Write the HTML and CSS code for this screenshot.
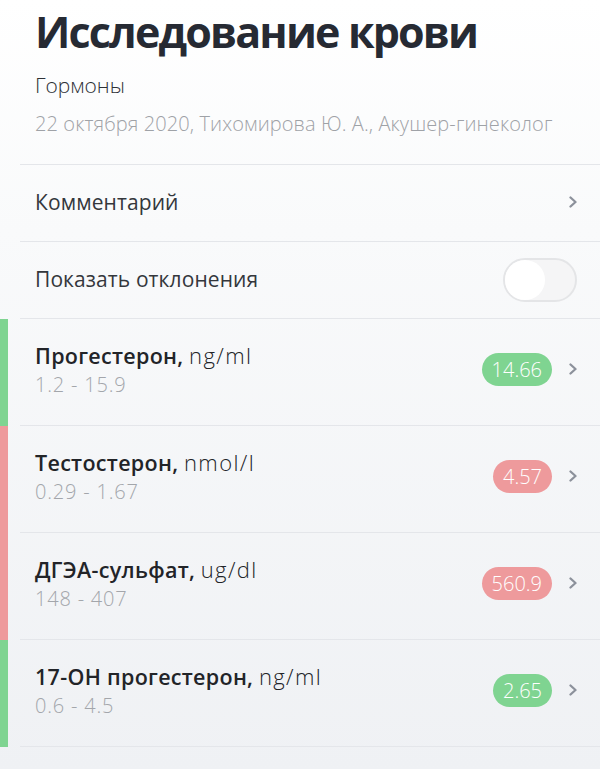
FILE: index.html
```html
<!DOCTYPE html>
<html lang="ru">
<head>
<meta charset="utf-8">
<title>Исследование крови</title>
<link rel="stylesheet" href="styles.css">
</head>
<body>
<div class="page">
  <header class="header">
    <h1 class="title">Исследование крови</h1>
    <div class="subtitle">Гормоны</div>
    <div class="meta">22 октября 2020, Тихомирова Ю. А., Акушер-гинеколог</div>
  </header>
  <div class="list">
    <div class="row">
      <div class="row-inner first simple">
        <span class="label">Комментарий</span>
        <svg class="chev" viewBox="0 0 10 12" width="10" height="12"><path d="M2.5 1.5 L7.5 6 L2.5 10.5" fill="none" stroke="#8c919b" stroke-width="2.3" stroke-linecap="round" stroke-linejoin="round"/></svg>
      </div>
    </div>
    <div class="row">
      <div class="row-inner simple">
        <span class="label">Показать отклонения</span>
        <span class="toggle"><span class="knob"></span></span>
      </div>
    </div>
    <div class="row ok">
      <div class="row-inner test">
        <div class="info">
          <div class="name"><b>Прогестерон,</b> <span class="unit">ng/ml</span></div>
          <div class="range">1.2 - 15.9</div>
        </div>
        <span class="badge green">14.66</span>
        <svg class="chev" viewBox="0 0 10 12" width="10" height="12"><path d="M2.5 1.5 L7.5 6 L2.5 10.5" fill="none" stroke="#8c919b" stroke-width="2.3" stroke-linecap="round" stroke-linejoin="round"/></svg>
      </div>
    </div>
    <div class="row bad">
      <div class="row-inner test">
        <div class="info">
          <div class="name"><b>Тестостерон,</b> <span class="unit">nmol/l</span></div>
          <div class="range">0.29 - 1.67</div>
        </div>
        <span class="badge red">4.57</span>
        <svg class="chev" viewBox="0 0 10 12" width="10" height="12"><path d="M2.5 1.5 L7.5 6 L2.5 10.5" fill="none" stroke="#8c919b" stroke-width="2.3" stroke-linecap="round" stroke-linejoin="round"/></svg>
      </div>
    </div>
    <div class="row bad">
      <div class="row-inner test">
        <div class="info">
          <div class="name"><b>ДГЭА-сульфат,</b> <span class="unit">ug/dl</span></div>
          <div class="range">148 - 407</div>
        </div>
        <span class="badge red">560.9</span>
        <svg class="chev" viewBox="0 0 10 12" width="10" height="12"><path d="M2.5 1.5 L7.5 6 L2.5 10.5" fill="none" stroke="#8c919b" stroke-width="2.3" stroke-linecap="round" stroke-linejoin="round"/></svg>
      </div>
    </div>
    <div class="row ok">
      <div class="row-inner test">
        <div class="info">
          <div class="name"><b>17-OH прогестерон,</b> <span class="unit">ng/ml</span></div>
          <div class="range">0.6 - 4.5</div>
        </div>
        <span class="badge green">2.65</span>
        <svg class="chev" viewBox="0 0 10 12" width="10" height="12"><path d="M2.5 1.5 L7.5 6 L2.5 10.5" fill="none" stroke="#8c919b" stroke-width="2.3" stroke-linecap="round" stroke-linejoin="round"/></svg>
      </div>
    </div>
  </div>
</div>
</body>
</html>
```
FILE: styles.css
```css
html, body {
  margin: 0;
  padding: 0;
}
body {
  width: 600px;
  height: 769px;
  overflow: hidden;
  font-family: "Open Sans", "Noto Sans", sans-serif;
  background: linear-gradient(180deg, #ffffff 0%, #f9fafb 30%, #eff1f4 100%);
  color: #2a2d33;
}
.page {
  width: 600px;
}
.header {
  padding: 0 0 0 35px;
  height: 164px;
  box-sizing: border-box;
}
.title {
  margin: 0;
  padding-top: 3px;
  font-size: 43px;
  line-height: 57px;
  font-weight: 700;
  color: #262a33;
  letter-spacing: -1.85px;
}
.subtitle {
  margin-top: 11px;
  font-size: 21px;
  line-height: 28px;
  font-weight: 300;
  color: #2e3136;
}
.meta {
  margin-top: 12px;
  font-size: 20px;
  line-height: 26px;
  font-weight: 300;
  letter-spacing: 0.1px;
  color: #9fa2a7;
}
.row {
  border-left: 8px solid transparent;
}
.row.ok {
  border-left-color: #7fd491;
}
.row.bad {
  border-left-color: #ee9a9c;
}
.row-inner {
  margin-left: 12px;
  padding: 0 22px 0 15px;
  display: flex;
  align-items: center;
  border-bottom: 1.5px solid #e4e6ea;
  box-sizing: border-box;
}
.row-inner.first {
  border-top: 1.5px solid #e4e6ea;
}
.row-inner.simple {
  height: 77px;
  padding-bottom: 3px;
}
.row-inner.first.simple {
  height: 78px;
}
.label {
  flex: 1;
  font-size: 21px;
  font-weight: 400;
  letter-spacing: 0.1px;
  color: #34373c;
}
.chev {
  display: block;
  flex: none;
}
.toggle {
  width: 74px;
  height: 44px;
  border-radius: 22px;
  border: 2px solid #e4e5e7;
  background: #f5f5f6;
  box-sizing: border-box;
  margin-right: 1px;
  margin-top: 2px;
  position: relative;
}
.knob {
  position: absolute;
  left: 0;
  top: 0;
  width: 40px;
  height: 40px;
  border-radius: 50%;
  background: #ffffff;
}
.row-inner.test {
  height: 107px;
  padding-bottom: 6px;
}
.info {
  flex: 1;
}
.name {
  font-size: 21.5px;
  line-height: 28px;
  color: #222428;
}
.name b {
  font-weight: 600;
  letter-spacing: 0.3px;
}
.unit {
  font-size: 22px;
  font-weight: 300;
  letter-spacing: 1.4px;
}
.range {
  margin-top: 3px;
  font-size: 20px;
  line-height: 24px;
  font-weight: 300;
  letter-spacing: 0.8px;
  color: #a3a6ab;
}
.badge {
  height: 33px;
  line-height: 33px;
  padding: 0 10px;
  border-radius: 17px;
  color: #ffffff;
  font-size: 20px;
  font-weight: 300;
  margin-right: 16px;
}
.badge.green {
  background: #7fd491;
}
.badge.red {
  background: #ee9a9c;
}
```
